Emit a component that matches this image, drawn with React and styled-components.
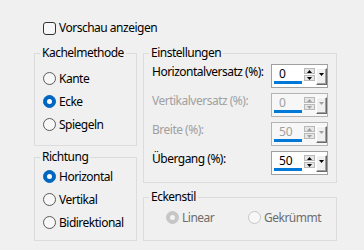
import React from 'react';
import styled, { createGlobalStyle } from 'styled-components';

const GlobalStyle = createGlobalStyle`
  html, body {
    margin: 0;
    padding: 0;
    background: #f0f0f0;
  }
  body {
    font-family: 'Segoe UI', 'Noto Sans', 'Liberation Sans', sans-serif;
    font-size: 12px;
    letter-spacing: -0.5px;
    color: #000;
  }
`;

const Page = styled.div`
  width: 364px;
  height: 250px;
  box-sizing: border-box;
  padding: 20px 0 0 34px;
  display: flex;
  flex-direction: column;
  gap: 9px;
`;

const CheckRow = styled.label`
  display: flex;
  align-items: center;
  gap: 3px;
  margin-left: 9px;
  height: 16px;
  line-height: 16px;
`;

const CheckBox = styled.span`
  width: 13px;
  height: 13px;
  box-sizing: border-box;
  border: 1px solid #333;
  border-radius: 3px;
  background: #f7f7f7;
`;

const Columns = styled.div`
  display: flex;
  gap: 6px;
  align-items: flex-start;
`;

const Column = styled.div`
  width: ${p => p.$width}px;
  display: flex;
  flex-direction: column;
  gap: ${p => p.$gap}px;
`;

const Group = styled.fieldset`
  margin: 0;
  min-width: 0;
  border: 1px solid #dcdcdc;
  padding: ${p => p.$pt}px 8px ${p => p.$pb}px 5px;
`;

const Legend = styled.legend`
  padding: 0 2px;
  line-height: 16px;
`;

const RadioList = styled.div`
  display: flex;
  flex-direction: column;
  padding-left: 3px;
`;

const RadioItem = styled.div`
  display: flex;
  align-items: center;
  gap: 3px;
  height: 23px;
  white-space: nowrap;
  color: ${p => (p.$disabled ? '#6d6d6d' : '#000')};
`;

const RadioDot = styled.span`
  width: 13px;
  height: 13px;
  box-sizing: border-box;
  border-radius: 50%;
  flex: none;
  display: flex;
  align-items: center;
  justify-content: center;
  border: 1px solid ${p => (p.$disabled ? '#c6c6c6' : p.$checked ? '#0067c0' : '#5a5a5a')};
  background: ${p => (p.$checked ? (p.$disabled ? '#c6c6c6' : '#0067c0') : '#f7f7f7')};

  &::after {
    content: '';
    display: ${p => (p.$checked ? 'block' : 'none')};
    width: 5px;
    height: 5px;
    border-radius: 50%;
    background: ${p => (p.$disabled ? '#f3f3f3' : '#fff')};
  }
`;

const RadioGrid = styled.div`
  display: grid;
  grid-template-columns: 82px 82px;
  padding-left: 17px;
`;

const SpinRows = styled.div`
  display: flex;
  flex-direction: column;
  gap: 5px;
`;

const SpinRow = styled.div`
  display: flex;
  justify-content: space-between;
  align-items: flex-start;
  padding-left: 3px;
`;

const SpinLabel = styled.span`
  line-height: 16px;
  white-space: nowrap;
  color: ${p => (p.$disabled ? '#a0a0a0' : '#000')};
`;

const SpinBox = styled.div`
  width: 57px;
  height: 24px;
  flex: none;
  box-sizing: border-box;
  border: 1px solid ${p => (p.$disabled ? '#b4b4b4' : '#a0a0a0')};
  background: ${p => (p.$disabled ? '#f7f7f7' : '#fff')};
  padding: 2px 0 0 2px;
  display: flex;
  align-items: flex-start;
`;

const Field = styled.div`
  width: 28px;
  display: flex;
  flex-direction: column;
`;

const Value = styled.span`
  padding-left: 5px;
  line-height: 14px;
  letter-spacing: 0;
  color: ${p => (p.$disabled ? '#a0a0a0' : '#000')};
`;

const Bar = styled.span`
  height: 3px;
  background: #0078d7;
`;

const Steppers = styled.div`
  margin: 1px 0 0 2px;
  display: flex;
  flex-direction: column;
  gap: 1px;
`;

const StepButton = styled.span`
  width: 11px;
  height: 6px;
  box-sizing: border-box;
  border: 1px solid #b9b9b9;
  background: #e6e6e6;
  display: flex;
  align-items: center;
  justify-content: center;
`;

const DropButton = styled.span`
  margin: 1px 0 0 1px;
  width: 11px;
  height: 17px;
  box-sizing: border-box;
  background: #f0f0f0;
  border-top: 1px solid #fff;
  border-left: 1px solid #fff;
  border-right: 1px solid #696969;
  border-bottom: 1px solid #696969;
  box-shadow: inset -1px -1px 0 #a0a0a0;
  display: flex;
  justify-content: center;
  padding-top: 4px;
`;

const Arrow = ({ up, color, w = 5 }) => (
  <svg width={w} height={3} viewBox={`0 0 ${w} 3`}>
    <polygon
      points={up ? `0,3 ${w},3 ${w / 2},0` : `0,0 ${w},0 ${w / 2},3`}
      fill={color}
    />
  </svg>
);

const Spin = ({ value, disabled }) => {
  const c = disabled ? '#a0a0a0' : '#000';
  return (
    <SpinBox $disabled={disabled}>
      <Field>
        <Value $disabled={disabled}>{value}</Value>
        <Bar />
      </Field>
      <Steppers>
        <StepButton><Arrow up color={c} /></StepButton>
        <StepButton><Arrow color={c} /></StepButton>
      </Steppers>
      <DropButton><Arrow color={c} /></DropButton>
    </SpinBox>
  );
};

const Radio = ({ label, checked, disabled }) => (
  <RadioItem $disabled={disabled}>
    <RadioDot $checked={checked} $disabled={disabled} />
    {label}
  </RadioItem>
);

const spins = [
  { label: 'Horizontalversatz (%):', value: '0' },
  { label: 'Vertikalversatz (%):', value: '0', disabled: true },
  { label: 'Breite (%):', value: '50', disabled: true },
  { label: 'Übergang (%):', value: '50' },
];

export default function App() {
  return (
    <Page>
      <GlobalStyle />
      <CheckRow>
        <CheckBox />
        Vorschau anzeigen
      </CheckRow>
      <Columns>
        <Column $width={103} $gap={3}>
          <Group $pt={6} $pb={9}>
            <Legend>Kachelmethode</Legend>
            <RadioList>
              <Radio label="Kante" />
              <Radio label="Ecke" checked />
              <Radio label="Spiegeln" />
            </RadioList>
          </Group>
          <Group $pt={0} $pb={6}>
            <Legend>Richtung</Legend>
            <RadioList>
              <Radio label="Horizontal" checked />
              <Radio label="Vertikal" />
              <Radio label="Bidirektional" />
            </RadioList>
          </Group>
        </Column>
        <Column $width={194} $gap={6}>
          <Group $pt={3} $pb={7}>
            <Legend>Einstellungen</Legend>
            <SpinRows>
              {spins.map(s => (
                <SpinRow key={s.label}>
                  <SpinLabel $disabled={s.disabled}>{s.label}</SpinLabel>
                  <Spin value={s.value} disabled={s.disabled} />
                </SpinRow>
              ))}
            </SpinRows>
          </Group>
          <Group $pt={1} $pb={11}>
            <Legend>Eckenstil</Legend>
            <RadioGrid>
              <Radio label="Linear" checked disabled />
              <Radio label="Gekrümmt" disabled />
            </RadioGrid>
          </Group>
        </Column>
      </Columns>
    </Page>
  );
}
